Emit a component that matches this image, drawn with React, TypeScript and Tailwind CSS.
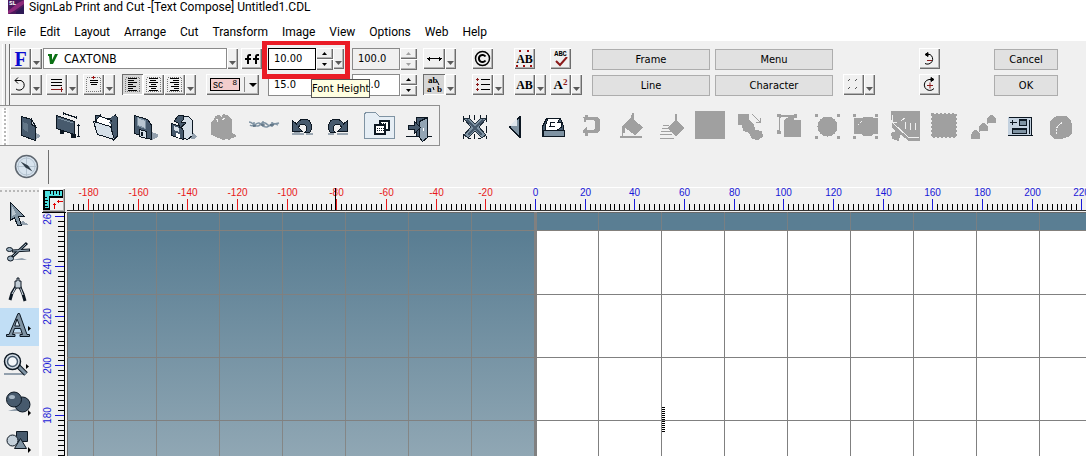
import { useEffect, useState } from "react";
import type { ReactNode } from "react";
import clsx from "clsx";

const RAISED =
  "bg-[#f0f0f0] shadow-[inset_1px_1px_0_#fff,inset_-1px_-1px_0_#6d6d6d,inset_-2px_-2px_0_#b4b4b4]";
const PRESSED = "bg-[#d6d6d6] shadow-[inset_1px_1px_0_#6d6d6d,inset_-1px_-1px_0_#fff]";

const MENUS = [
  "File",
  "Edit",
  "Layout",
  "Arrange",
  "Cut",
  "Transform",
  "Image",
  "View",
  "Options",
  "Web",
  "Help",
];

type ToolProps = {
  label: string;
  children: ReactNode;
  wide?: boolean;
  pressed?: boolean;
};

const Tool = ({ label, children, wide, pressed }: ToolProps) => (
  <button
    type="button"
    aria-label={label}
    className={clsx(
      "flex h-[21px] shrink-0 items-center justify-center",
      wide ? "w-[22px]" : "w-[21px]",
      pressed ? PRESSED : RAISED
    )}
  >
    {children}
  </button>
);

const DropButton = ({ label }: { label: string }) => (
  <button
    type="button"
    aria-label={label}
    className={clsx("flex h-[21px] w-[11px] shrink-0 items-end justify-center pb-[4px]", RAISED)}
  >
    <svg width="7" height="4" viewBox="0 0 7 4">
      <path d="M0 0h7L3.500 4z" fill="#5a5a5a" />
    </svg>
  </button>
);

const ToolIcon = ({ children }: { children: ReactNode }) => (
  <svg width="21" height="21" viewBox="0 0 21 21" fill="none" stroke="#000" shapeRendering="crispEdges">
    {children}
  </svg>
);

type SpinFieldProps = {
  label: string;
  initial: string;
  active?: boolean;
  disabled?: boolean;
};

const SpinField = ({ label, initial, active, disabled }: SpinFieldProps) => {
  const [value, setValue] = useState(initial);
  const digits = initial.split(".")[1].length;
  const step = (by: number) => setValue((Number(value) + by).toFixed(digits));

  return (
    <div className="flex h-[22px] shrink-0">
      <input
        aria-label={label}
        value={value}
        disabled={disabled}
        onChange={(e) => setValue(e.target.value)}
        className={clsx(
          "h-[22px] w-[48px] border pb-[2px] pl-[5px] outline-none",
          active ? "border-black" : "border-[#8a8a8a]",
          disabled ? "bg-[#f0f0f0]" : "bg-white"
        )}
      />
      <div className="flex flex-col">
        {[1, -1].map((by) => (
          <button
            key={by}
            type="button"
            aria-label={by > 0 ? `${label} up` : `${label} down`}
            disabled={disabled}
            onClick={() => step(by)}
            className={clsx("flex h-[11px] w-[17px] items-center justify-center", RAISED)}
          >
            <svg width="5" height="3" viewBox="0 0 5 3">
              <path d={by > 0 ? "M0 3h5L2.500 0z" : "M0 0h5L2.500 3z"} fill={disabled ? "#a0a0a0" : "#000"} />
            </svg>
          </button>
        ))}
      </div>
    </div>
  );
};

const PushButton = ({ children }: { children: string }) => (
  <button type="button" className="h-[21px] w-full border border-[#adadad] bg-[#e1e1e1] leading-[18px]">
    {children}
  </button>
);

const alignLines = (kind: "left" | "center" | "right") => {
  const widths = [9, 6, 9, 5, 8, 5, 9];
  return widths.map((w, i) => {
    const x = kind === "left" ? 6 : kind === "right" ? 15 - w : 10 - Math.floor(w / 2);
    return <path key={i} d={`M${x} ${4.5 + i * 2}h${w}`} />;
  });
};

const dottedFrame = <rect x="3.500" y="3.500" width="14" height="14" stroke="#777" strokeDasharray="1 1" />;

const TextToolbar = () => (
  <div className="flex h-[64px] gap-[3px] overflow-hidden pl-[2px] font-['DejaVu_Sans_Condensed','DejaVu_Sans',sans-serif] text-[11px]">
    <div className="mt-[3px] w-[4px] border-l border-r border-l-white border-r-[#8c8c8c]" />
    <div className="mt-[3px] flex items-start border-l border-[#6f6f6f] pt-[4px]">
      {/* font, rotation, alignment */}
      <div className="flex w-[252px] shrink-0 flex-col gap-[5px]">
        <div className="flex">
          <Tool label="Font style">
            <span className="font-['Liberation_Serif',serif] text-[20px] leading-none font-bold text-[#0a0ad0]">F</span>
          </Tool>
          <DropButton label="Font style options" />
          <label className="ml-px flex h-[21px] w-[186px] items-center border border-[#8a8a8a] bg-white pl-[4px]">
            <svg width="10" height="11" viewBox="0 0 10 11" className="mr-[6px]">
              <path d="M0 1h4v6l3-6h3L5 11H2L1 3H0z" fill="#0b7014" />
            </svg>
            <select aria-label="Font" className="flex-1 appearance-none bg-transparent text-[12px] outline-none">
              <option>CAXTONB</option>
            </select>
          </label>
          <DropButton label="Font list" />
          <span className="ml-[3px] flex">
            <Tool label="Ligatures">
              <svg width="14" height="12" viewBox="0 0 14 12" fill="none" stroke="#000" strokeWidth="2">
                <path d="M6 2H4.500Q3 2 3 4v7M0 6h6M14 2h-1.500Q11 2 11 4v7M8 6h6" />
              </svg>
            </Tool>
          </span>
        </div>
        <div className="flex">
          <Tool label="Rotate text">
            <ToolIcon>
              <path d="M5 6.500h6a5 5 0 1 1-5 8.500M8 3.500l-3 3 3 3" shapeRendering="auto" />
            </ToolIcon>
          </Tool>
          <DropButton label="Rotate options" />
          <span className="ml-[4px] flex">
            <Tool label="Text direction">
              <ToolIcon>
                <path d="M5 5.500h11M5 8.500h11M5 11.500h11" />
                <path d="M5 15.500h12M15.500 13v5" stroke="#8b1a1a" />
              </ToolIcon>
            </Tool>
            <DropButton label="Direction options" />
          </span>
          <span className="ml-[5px] flex">
            <Tool label="Vertical position">
              <ToolIcon>
                {dottedFrame}
                <path d="M7 6.500h8M7 8.500h8M8 10.500h6" />
                <path d="M10.500 2v3M9 3.500h3" stroke="#a01010" />
              </ToolIcon>
            </Tool>
            <DropButton label="Position options" />
          </span>
          <span className="ml-[7px] flex">
            <Tool label="Align left" pressed>
              <ToolIcon>{dottedFrame}{alignLines("left")}</ToolIcon>
            </Tool>
            <Tool label="Align centre">
              <ToolIcon>{dottedFrame}{alignLines("center")}</ToolIcon>
            </Tool>
            <Tool label="Align right">
              <ToolIcon>{dottedFrame}{alignLines("right")}</ToolIcon>
            </Tool>
            <DropButton label="Align options" />
          </span>
          <button
            type="button"
            className={clsx("ml-[10px] flex h-[21px] w-[53px] shrink-0 items-center gap-[4px] pl-[4px]", RAISED)}
          >
            <span className="flex h-[13px] w-[30px] justify-between border border-black bg-[#f3cdcd] px-[2px] font-['Liberation_Sans',sans-serif] text-[10px] leading-[12px]">
              sc<span className="text-[8px] leading-[8px]">8</span>
            </span>
            <svg width="13" height="15" viewBox="0 0 13 15">
              <path d="M.5 0v15" stroke="#8a8a8a" />
              <path d="M5 6h8l-4 4z" fill="#000" />
            </svg>
          </button>
        </div>
      </div>

      {/* font height with its highlight */}
      <div className="relative ml-[6px] flex shrink-0 flex-col gap-[4px]">
        <div className="flex">
          <SpinField label="Font Height" initial="10.00" active />
          <DropButton label="Font height units" />
        </div>
        <SpinField label="Line height" initial="15.0" />
        <div className="pointer-events-none absolute -top-[8px] -left-[6px] z-10 h-[39px] w-[88px] border-[5px] border-[#ea1c26]" />
        <div
          role="tooltip"
          className="absolute top-[31px] left-[43px] z-20 border border-[#555] bg-[#ffffe1] leading-[17px] whitespace-nowrap"
        >
          Font Height
        </div>
      </div>
      <div className="ml-[8px] flex shrink-0 flex-col gap-[4px]">
        <SpinField label="Font width" initial="100.0" disabled />
        <SpinField label="Slant" initial="10.0" />
      </div>

      <div className="ml-[6px] flex shrink-0 flex-col gap-[5px]">
        <div className="flex">
          <Tool label="Letter spacing" wide>
            <ToolIcon>
              <path d="M3 10.500h15M5.500 8.500v4M15.500 8.500v4M4.500 9.500v2M16.500 9.500v2" />
            </ToolIcon>
          </Tool>
          <DropButton label="Spacing options" />
        </div>
        <div className="flex">
          <Tool label="Kerning" wide pressed>
            <svg
              width="18"
              height="18"
              viewBox="0 0 18 18"
              className="font-['Liberation_Serif',serif] text-[9px] font-bold"
            >
              <text x="3" y="7">ab</text>
              <text x="2" y="16">a</text>
              <text x="12" y="16">b</text>
              <path d="M12 5l2 4M8 11l1 3" stroke="#000" />
            </svg>
          </Tool>
          <DropButton label="Kerning options" />
        </div>
      </div>
      <div className="ml-[16px] flex w-[32px] shrink-0 flex-col gap-[5px]">
        <Tool label="Copyright symbol">
          <svg width="17" height="17" viewBox="0 0 17 17" fill="none" stroke="#000">
            <circle cx="8.500" cy="8.500" r="7" strokeWidth="1.500" />
            <path d="M11.500 6.500a3.600 3.600 0 1 0 0 4" strokeWidth="2" />
          </svg>
        </Tool>
        <div className="flex">
          <Tool label="Bullets">
            <ToolIcon>
              <path d="M9 5.500h9M9 10.500h9M9 15.500h9" />
              <path d="M4 5.500h3M4 10.500h3M4 15.500h3M5.500 4v3M5.500 9v3M5.500 14v3" stroke="#8b1a1a" />
            </ToolIcon>
          </Tool>
          <DropButton label="Bullet options" />
        </div>
      </div>
      <div className="ml-[10px] flex w-[32px] shrink-0 flex-col gap-[5px]">
        <Tool label="Character marks">
          <span className="relative font-['Liberation_Serif',serif] text-[12px] leading-none font-bold">
            AB
            <svg className="absolute -top-[3px] left-0" width="17" height="18" viewBox="0 0 17 18" fill="#a01010">
              <path d="M3 0h2v2H3zM11 0h2v2h-2zM0 15h2v2H0zM7 15h2v2H7zM14 15h2v2h-2z" />
            </svg>
          </span>
        </Tool>
        <div className="flex">
          <Tool label="Case">
            <span className="font-['Liberation_Serif',serif] text-[12px] leading-none font-bold">AB</span>
          </Tool>
          <DropButton label="Case options" />
        </div>
      </div>
      <div className="ml-[4px] flex w-[32px] shrink-0 flex-col gap-[5px]">
        <Tool label="Spelling">
          <span className="flex flex-col items-center font-['Liberation_Mono',monospace] text-[7px] leading-[6px] font-bold">
            ABC
            <svg width="14" height="10" viewBox="0 0 14 10" fill="none" stroke="#8b1a1a" strokeWidth="2">
              <path d="M2 4l4 4 7-8" />
            </svg>
          </span>
        </Tool>
        <div className="flex">
          <Tool label="Superscript">
            <span className="flex font-['Liberation_Serif',serif] text-[13px] leading-none font-bold">
              A<sup className="top-0 text-[9px] leading-none text-[#8b1a1a]">2</sup>
            </span>
          </Tool>
          <DropButton label="Superscript options" />
        </div>
      </div>

      <div className="ml-[10px] grid w-[241px] shrink-0 grid-cols-2 gap-x-[5px] gap-y-[5px] pt-px">
        <PushButton>Frame</PushButton>
        <PushButton>Menu</PushButton>
        <PushButton>Line</PushButton>
        <PushButton>Character</PushButton>
      </div>
      <div className="mt-[26px] ml-[10px] flex shrink-0">
        <Tool label="Frame corners">
          <ToolIcon>
            <g stroke="#555" shapeRendering="auto">
              <path d="M5 7l2-2M12 7l2-2M5 15l2-2M12 15l2-2" />
            </g>
          </ToolIcon>
        </Tool>
        <DropButton label="Corner options" />
      </div>
      <div className="ml-[44px] flex shrink-0 flex-col gap-[5px]">
        <Tool label="Undo">
          <ToolIcon>
            <g shapeRendering="auto">
              <path d="M7 6.500h4a5 5 0 1 1-5 9" />
              <path d="M6 6.500l3-2v4z" fill="#000" />
              <path d="M8 12.500h5" stroke="#8b1a1a" />
            </g>
          </ToolIcon>
        </Tool>
        <Tool label="Redo">
          <ToolIcon>
            <g shapeRendering="auto">
              <path d="M13 5.500h-3a5.500 5.500 0 1 0 5 9" />
              <path d="M15 5.500l-3-2v4z" fill="#000" />
              <path d="M8 11.500h6M11 8.500v6" stroke="#8b1a1a" />
            </g>
          </ToolIcon>
        </Tool>
      </div>
      <div className="ml-[54px] flex w-[64px] shrink-0 flex-col gap-[5px] pt-px">
        <PushButton>Cancel</PushButton>
        <PushButton>OK</PushButton>
      </div>
    </div>
  </div>
);

const INK = "#0c1722";
const STEEL = "#475a6d";
const MID = "#7f93a3";
const PALE = "#d5dfe8";
const OFF = "#a0a0a0";

const FILE_ICONS: [string, ReactNode][] = [
  [
    "New",
    <>
      <path d="M27 25l4 2v2l-5 3-5-2z" fill="#93a0ad" />
      <path d="M12.500 8.500l10 3 4 6v15l-14-5z" fill={STEEL} stroke={INK} />
      <path d="M22.500 11.500v5l4 2z" fill={PALE} stroke={INK} />
      <path d="M14 14l5 2v8l-5-3z" fill={MID} opacity=".5" />
    </>,
  ],
  [
    "Page size",
    <>
      <path d="M12 21v4h3v-2M23 25v4h4v-3" fill={INK} stroke={INK} />
      <path d="M8.500 7.500l18 6v13l-18-6z" fill={STEEL} stroke={INK} />
      <path d="M10 10l15 5" stroke={MID} />
      <path d="M15 5.500h2v1h3v1h3v1h3v1h3M15 4v3M28 8v3M30.500 16v13M29 17h3M29 28h3" stroke={INK} />
    </>,
  ],
  [
    "Open",
    <>
      <path d="M8.500 15v-7l5-1 2 3 9 1 4-4 2 3v18l-4 4z" fill={STEEL} stroke={INK} />
      <path d="M9 12l4-4 12 5-1 10-15-8z" fill="#fff" stroke={INK} />
      <path d="M6.500 13.500l17 5 4 13-17-5z" fill={PALE} stroke={INK} />
      <path d="M23 14c2 2 4 0 4-5l-3 1" fill="none" stroke={STEEL} strokeWidth="2" />
    </>,
  ],
  [
    "Save",
    <>
      <path d="M25 24l7 2v3l-6 3z" fill="#93a0ad" />
      <path d="M8.500 7.500l13 4 3.500 5v15l-16.500-6z" fill={STEEL} stroke={INK} />
      <path d="M11.500 9.500l8 3v8l-8-3z" fill="#b9c6d1" stroke={MID} />
      <path d="M13.500 21.500l7 2v7l-7-2z" fill={PALE} stroke={INK} />
      <path d="M16 24v4" stroke={INK} strokeWidth="2" />
    </>,
  ],
  [
    "Save as",
    <>
      <path d="M14.500 8.500h9l4 4v15l-5 4-8-3z" fill={PALE} stroke={INK} />
      <path d="M6.500 15.500l9 3 3 4v9l-12-4z" fill={STEEL} stroke={INK} />
      <path d="M9 18l5 2v4l-5-2z" fill={PALE} />
      <path d="M11 25l4 1v4l-4-1z" fill="#fff" />
      <path d="M9 13l4-5 5-1 1 4-3 3 5 1-6 5-2-5z" fill={STEEL} stroke={INK} />
      <path d="M28 25l4 3-3 3h-3z" fill="#93a0ad" />
    </>,
  ],
  [
    "Revert",
    <>
      <path
        d="M7 14l3-2 1-4 4-1 3 2 1-3 4 1 5 4v14l4 2v2l-4 1-3 2-3-1-3 1-9-4-3-1z"
        fill={OFF}
      />
      <path d="M12 11h2l-1 3M18 12l3-2" stroke="#f0f0f0" />
    </>,
  ],
  [
    "Barbed line",
    <g stroke={MID} fill="none" shapeRendering="auto">
      <path
        d="M6 14c4 0 5 5 9 4s3-5 7-3 3 4 7 2 4-1 7-2M7 17c4 3 6-3 9-2s4 5 8 4 4-6 11-2M11 14v5M20 13v6M29 14v5"
        strokeWidth="1.500"
      />
      <path d="M10 18h3M18 17h4M27 17h4" stroke={STEEL} />
    </g>,
  ],
  [
    "Undo",
    <>
      <path d="M10 26h12M24 26h7M12 24h6" stroke="#9aa6b1" strokeWidth="2" />
      <path d="M10.500 12.500v11h10l-3.500-3.500c-1-4 6-6 8 0 0 2-1 3-2 4h5c3-4 2-12-5-13-4 0-7 2-8.500 5z" fill={STEEL} stroke={INK} />
    </>,
  ],
  [
    "Redo",
    <>
      <path d="M7 26h6M16 26h11" stroke="#9aa6b1" strokeWidth="2" />
      <path d="M26.500 12.500v11h-10l3.500-3.500c1-4-6-6-8 0 0 2 1 3 2 4H9c-3-4-2-12 5-13 4 0 7 2 8.500 5z" fill={STEEL} stroke={INK} />
    </>,
  ],
  [
    "Job folder",
    <>
      <path d="M4.500 30.500v-25l2-1h9l4 4h15v22z" fill="#e6eef5" stroke={MID} />
      <path d="M19.500 12.500h9v9h-9z" fill="#fff" stroke={INK} strokeWidth="2" />
      <path d="M14.500 16.500h10v9h-10z" fill="#fff" stroke={INK} strokeWidth="2" />
      <path d="M17 20.500h7M17 22.500h7M21 15.500h6" stroke={INK} strokeDasharray="1 1" />
    </>,
  ],
  [
    "Exit",
    <>
      <path d="M7 28.500h12M27 28.500h6" stroke={INK} />
      <path d="M17.500 9.500h11v19h-11z" fill={STEEL} stroke={INK} />
      <path d="M20.500 29.500v-16l8-4v20l-5 4z" fill="#93a5b4" stroke={INK} />
      <path d="M9.500 17.500h6v-4l6 6-6 6v-4h-6z" fill={STEEL} stroke={INK} />
      <path d="M24 20v3" stroke="#fff" />
    </>,
  ],
];

const EDIT_ICONS: [string, ReactNode][] = [
  [
    "Delete",
    <>
      <path d="M7.500 8v6M7.500 26v5M18.500 7v5M18.500 26v5M30.500 7v7M30.500 18v7M30.500 28v3M12 30.500h3M22 30.500h3M13.500 7v3M24.500 7v3" stroke={INK} />
      <path d="M8 11l5-1 6 6 6-6 5 1-7 8 7 8-4 3-7-7-7 7-4-3 7-8z" fill={MID} stroke="#22303d" />
      <path d="M11 12l15 15M27 12L12 27" stroke={STEEL} strokeWidth="2" />
    </>,
  ],
  [
    "Mirror",
    <>
      <path d="M26 8v22h-2L13 19 24 8z" fill={INK} />
      <path d="M23.500 11v16l-8-8z" fill={MID} />
      <path d="M14 18l8-8v8z" fill="#dfe7ee" />
    </>,
  ],
  [
    "Output tray",
    <>
      <path d="M8.500 18.500l4-8h14l3 8v10h-21z" fill={STEEL} stroke={INK} />
      <path d="M11 19l3-9h12l-2 4h3l1 5-5 3h-12z" fill="#fff" stroke={INK} />
      <path d="M21 14h-4l-1 4h5" stroke={INK} fill="none" />
      <path d="M9 22h21v6H9z" fill={MID} stroke={INK} />
    </>,
  ],
  [
    "Return",
    <path d="M10 9h2V7h3v2h9l3 3v10l-3 3h-9v3h-3v-3h-2v-3l4-3v3h7l1-2v-6l-1-2h-8v2h-2v-3z" fill={OFF} />,
  ],
  ["Fill", <path d="M20 5h2v7l9 7-8 8-10-7v5h-2v3h19v2H8v-2h2V18l9-8z" fill={OFF} />],
  [
    "Gradient fill",
    <>
      <path d="M24 6h2v7l8 7-9 8-9-8 8-8z" fill={OFF} />
      <path d="M12 17h6M11 20.500h8M10 23.500h10M9 26.500h12M9 30h14" stroke={OFF} />
    </>,
  ],
  ["Solid", <path d="M5 3h30v28H5z" fill={OFF} />],
  [
    "Blend",
    <>
      <path d="M9 6h11v6l5 4 1 6 7 1 1 6-5 3-6-1-3-6-6-2-1-6H9z" fill={OFF} />
      <path d="M23 6l8 8M31 10v4h-4" stroke={OFF} fill="none" />
    </>,
  ],
  ["Align", <path d="M9 6h4v1h13V6h3v4h-3v2h7v17H16V12l5-3h-8v1h-1v13h1v3H9v-4h2V9H9z" fill={OFF} />],
  [
    "Circle nodes",
    <>
      <circle cx="20.500" cy="18.500" r="10" fill={OFF} />
      <path d="M8 6h3v3H8zM30 6h3v3h-3zM8 28h3v3H8zM30 28h3v3h-3z" fill={OFF} />
    </>,
  ],
  [
    "Box nodes",
    <>
      <path d="M7 6h3v3H7zM29 6h3v3h-3zM7 28h3v3H7zM29 28h3v3h-3zM8 10h7l3-1h7l3 1h4v16h-4l-3 2h-7l-3-2H8z" fill={OFF} />
      <path d="M12 17l4-4" stroke="#f0f0f0" strokeDasharray="2 1" />
    </>,
  ],
  [
    "Trace",
    <>
      <path d="M6 3h29v30H24L7 20z" fill={OFF} />
      <path d="M8 15l15 14h11M21 14l-1 7M25 15v7M30 15v7" stroke="#f0f0f0" fill="none" />
      <path d="M7 7v7h5M16 13l4-3" stroke="#f0f0f0" />
      <path d="M6 25l5-2 4 4-1 6-7-2z" fill={OFF} />
    </>,
  ],
  [
    "Stamp",
    <>
      <path d="M8 6h24v23H8z" fill={OFF} />
      <path d="M8 6h24v23H8z" fill="none" stroke={OFF} strokeWidth="2" strokeDasharray="2 2" />
    </>,
  ],
  [
    "Along path",
    <>
      <path d="M8 31v-4l3-5h3l3 4v5zM16 23v-4l3-4h3l3 4v4zM24 15v-4l3-4h3l3 4v4z" fill={OFF} />
      <path d="M15 25l2-2M24 16l2-2" stroke={OFF} />
    </>,
  ],
  [
    "Object panel",
    <>
      <path d="M6 9h24v19H6z" fill="#c3d1df" />
      <path d="M7 9.500h23M6 27.500h25M29.500 9v19" stroke={INK} />
      <path d="M17.500 12.500h7v5h-7zM10.500 21.500h14v4h-14z" fill={MID} stroke={INK} />
      <path d="M17 12h8M10 21h15" stroke={INK} strokeWidth="2" />
      <path d="M8 14.500h7M10.500 12v5M27.500 12v14" stroke={INK} />
    </>,
  ],
  [
    "Weld",
    <>
      <path d="M12 10l4-2h9l5 4 1 5v8l-4 4-7 2h-7l-4-5V13z" fill={OFF} />
      <path d="M15 26v-5l3-4 4-3" stroke="#f0f0f0" strokeDasharray="2 1" fill="none" />
    </>,
  ],
];

const IconButton = ({ label, children, selected }: { label: string; children: ReactNode; selected?: boolean }) => (
  <button type="button" aria-label={label} className={clsx("h-[38px] w-[39px] shrink-0", selected && "bg-[#c1def5]")}>
    <svg width="39" height="38" viewBox="0 0 39 38" fill="none" shapeRendering="crispEdges">
      {children}
    </svg>
  </button>
);

const IconToolbar = () => (
  <div className="flex overflow-hidden">
    <div className="flex h-[41px] w-[440px] shrink-0 border-t border-r border-b border-[#8f8f8f] pt-[2px]">
      <div className="w-[9px] border-x-2 border-[#f8f8f8] bg-white pl-[2px]">
        <div className="h-full border-l-2 border-dotted border-[#b8b8b8]" />
      </div>
      {FILE_ICONS.map(([label, art]) => (
        <IconButton key={label} label={label}>
          {art}
        </IconButton>
      ))}
    </div>
    <div className="flex pt-[3px] pl-[16px]">
      {EDIT_ICONS.map(([label, art]) => (
        <IconButton key={label} label={label}>
          {art}
        </IconButton>
      ))}
    </div>
  </div>
);

const CompassBar = () => (
  <div className="flex h-[41px] items-center">
    <button type="button" aria-label="Navigator" className="flex h-[34px] w-[49px] items-center border-r border-[#6f6f6f] pl-[14px]">
      <svg width="25" height="25" viewBox="0 0 25 25">
        <circle cx="12.500" cy="12.500" r="11" fill="#d7e3ee" stroke="#5f6770" strokeWidth="1.500" />
        <circle cx="12.500" cy="12.500" r="8.500" fill="none" stroke="#b4c3d0" />
        <path d="M12.500 3v19M3 12.500h19" stroke="#b4c3d0" />
        <path d="M6.500 7.500l7.500 4 4.500 6-7-4z" fill="#2f3c48" />
      </svg>
    </button>
  </div>
);

const DRAW_TOOLS: [string, ReactNode][] = [
  [
    "Select",
    <>
      <path d="M16 31h13l-6-4z" fill="#93a0ad" />
      <path d="M10.500 8.500v18l4-3 3 8h4l-3-9h6z" fill={MID} stroke={INK} />
      <path d="M12 12v10l4-2" fill="#b9c6d1" />
    </>,
  ],
  [
    "Cut",
    <g shapeRendering="auto">
      <path d="M12 28h15l-5-2z" fill="#93a0ad" />
      <path d="M30 18l-18 1M27 11L12 25" stroke={INK} strokeWidth="3" />
      <path d="M29 18l-16 1M26 12L13 24" stroke="#9db0bf" />
      <ellipse cx="9.500" cy="17.500" rx="3" ry="2" stroke={INK} fill="#9db0bf" />
      <ellipse cx="10.500" cy="26.500" rx="3" ry="2.500" stroke={INK} fill="#9db0bf" />
    </g>,
  ],
  [
    "Node edit",
    <g shapeRendering="auto">
      <path d="M17 15l-5 8-2 7M19 15l4 9 2 7" stroke={INK} strokeWidth="3" />
      <path d="M16 17l-4 7M20 17l3 8" stroke="#d5dfe8" />
      <path d="M17 8h2v3h2v7h-6v-7h2z" fill="#c2cdd6" stroke={INK} />
    </g>,
  ],
  [
    "Text",
    <g shapeRendering="auto">
      <path d="M12 25h10" stroke="#93a0ad" strokeWidth="2" />
      <path
        d="M18 5.500h1.500l7.500 21h2.500v2H20v-2h2.500l-2-6h-6l-2 6H15v2H6.500v-2H9z"
        fill={MID}
        stroke={INK}
      />
      <path d="M17 11l-2.200 7h5z" fill="#d8e9f7" stroke={INK} />
      <path d="M28 18v5l3-2.500z" fill="#000" />
    </g>,
  ],
  [
    "Zoom",
    <g shapeRendering="auto">
      <path d="M4 28h20" stroke="#93a0ad" strokeWidth="2" />
      <path d="M18 20l8 8" stroke={INK} strokeWidth="5" />
      <path d="M18 20l8 8" stroke={MID} strokeWidth="3" />
      <circle cx="12.500" cy="15.500" r="8" fill={PALE} stroke={INK} strokeWidth="1.500" />
      <circle cx="12.500" cy="15.500" r="5" fill="#f3f7fa" stroke={STEEL} strokeWidth="1.500" />
      <path d="M26 18v5l3-2.500z" fill="#000" />
    </g>,
  ],
  [
    "Shapes",
    <g shapeRendering="auto">
      <path d="M8 27h13l-3-3z" fill="#93a0ad" />
      <circle cx="22.500" cy="20.500" r="7.500" fill={STEEL} stroke={INK} />
      <circle cx="14" cy="15.500" r="7.500" fill={STEEL} stroke={INK} />
      <ellipse cx="12" cy="13" rx="3" ry="2" fill="#a6b6c4" />
      <path d="M28 26v6l3-3z" fill="#000" />
    </g>,
  ],
  [
    "Objects",
    <g shapeRendering="auto">
      <path d="M16.500 9.500h11v10h-11z" fill={STEEL} stroke={INK} />
      <circle cx="12.500" cy="18.500" r="5.500" fill="#c4d0da" stroke={INK} />
      <path d="M20.500 16.500l6 10h-12z" fill={MID} stroke={INK} />
      <path d="M28 25v6l3-3z" fill="#000" />
    </g>,
  ],
];

const DrawTools = () => (
  <div className="flex w-[39px] shrink-0 flex-col pt-[2px]">
    <div className="mb-[2px] h-[2px] border-b-2 border-dotted border-[#b8b8b8]" />
    {DRAW_TOOLS.map(([label, art]) => (
      <IconButton key={label} label={label} selected={label === "Text"}>
        {art}
      </IconButton>
    ))}
  </div>
);

// ruler scale: 20 units are 149/3 px, ticks every 2 units
const UNIT = 149 / 60;
const ORIGIN_X = 468;
const range = (from: number, to: number, step: number) => {
  const out: number[] = [];
  for (let v = from; v <= to; v += step) out.push(v);
  return out;
};

const HorizontalRuler = ({ length }: { length: number }) => {
  const last = Math.floor((length - ORIGIN_X) / UNIT);
  return (
    <svg className="h-[24px] w-full shrink-0 font-['Liberation_Sans',sans-serif]" shapeRendering="crispEdges">
      {range(-186, last, 2).map((v) => {
        const x = Math.round(ORIGIN_X + v * UNIT) + 0.5;
        const major = v % 20 === 0;
        const color = v < 0 ? "#e81818" : "#1818d8";
        return (
          <g key={v}>
            <path d={`M${x} ${major ? 11 : 16}V22`} stroke={major ? color : "#000"} />
            {major && (
              <text x={x} y="8" fontSize="10" textAnchor="middle" fill={color}>
                {v}
              </text>
            )}
          </g>
        );
      })}
      <path d="M0 22.500h4000" stroke="#333" />
      <path d="M268.500 0v22" stroke="#000" />
    </svg>
  );
};

const VerticalRuler = ({ length }: { length: number }) => {
  const first = Math.ceil((240 - (length - 54) / UNIT) / 2) * 2;
  return (
    <svg className="min-h-0 w-[24px] flex-1 font-['Liberation_Sans',sans-serif]" shapeRendering="crispEdges">
      {range(first, 260, 2).map((v) => {
        const y = Math.round(54 + (240 - v) * UNIT) + 0.5;
        const major = v % 20 === 0;
        return (
          <g key={v}>
            <path d={`M${major ? 13 : 16} ${y}H22`} stroke={major ? "#1818d8" : "#000"} />
            {major && (
              <text transform={`translate(9 ${y}) rotate(-90)`} fontSize="10" textAnchor="middle" fill="#1818d8">
                {v}
              </text>
            )}
          </g>
        );
      })}
      <path d="M22.500 0v4000" stroke="#000" />
      <path d="M0 .5h24" stroke="#000" />
    </svg>
  );
};

const Workspace = () => (
  <svg className="min-h-0 w-full flex-1 bg-linear-to-b from-[#5a7e93] from-10% to-[#90a7b4]" shapeRendering="crispEdges">
    <path d="M0 .5h4000M.5 0v4000" stroke="#6a6a6a" />
    <rect x="470" y="19" width="4000" height="4000" fill="#fff" />
    {range(-7, -1, 1).map((i) => (
      <path key={i} d={`M${467.5 + i * 63} 0V4000`} stroke="#83807c" opacity=".8" />
    ))}
    {range(1, 60, 1).map((i) => (
      <g key={i} stroke="#808080">
        <path d={`M${468.5 + i * 63} 0V18`} opacity=".8" />
        <path d={`M${468.5 + i * 63} 18V4000`} />
      </g>
    ))}
    <path d="M0 18.500h4000" stroke="#83807c" />
    {range(1, 30, 1).map((i) => (
      <path key={i} d={`M0 ${19.5 + i * 63}H4000`} stroke="#808080" />
    ))}
    <path d="M468.500 0v4000" stroke="#808080" strokeWidth="3" />
    <path d="M596.500 195v25" stroke="#000" strokeWidth="3" strokeDasharray="1 1" />
  </svg>
);

const App = () => {
  const [size, setSize] = useState({ width: window.innerWidth, height: window.innerHeight });

  useEffect(() => {
    const onResize = () => setSize({ width: window.innerWidth, height: window.innerHeight });
    window.addEventListener("resize", onResize);
    return () => window.removeEventListener("resize", onResize);
  }, []);

  return (
    <div className="flex h-screen flex-col overflow-hidden bg-[#f0f0f0] text-black">
      <header className="bg-white font-['Roboto',sans-serif] text-[12px]">
        <div className="flex h-[22px] items-start gap-[5px] pl-[8px]">
          <svg width="16" height="14" viewBox="0 0 16 14">
            <path d="M0 0h16v14H0z" fill="#4b1a5c" />
            <path d="M0 11L10 3l6-3v4L6 11l-6 3z" fill="#8e2b7c" />
            <path d="M8 12l8-6v8H8z" fill="#2d1a55" />
            <text x="1" y="5" fontSize="6" fontWeight="bold" fill="#fff">
              SL
            </text>
          </svg>
          <h1 className="leading-[14px] whitespace-nowrap">SignLab Print and Cut -[Text Compose] Untitled1.CDL</h1>
        </div>
        <nav className="flex h-[19px] gap-[14px] pl-[7px] leading-[20px]">
          {MENUS.map((menu) => (
            <button key={menu} type="button">
              {menu}
            </button>
          ))}
        </nav>
      </header>
      <TextToolbar />
      <IconToolbar />
      <CompassBar />
      <main className="flex min-h-0 flex-1 border-t border-white">
        <DrawTools />
        <div className="flex w-[28px] shrink-0 flex-col border-l-3 border-white">
          <button type="button" aria-label="Ruler origin" className={clsx("h-[24px] w-[23px] shrink-0", RAISED)}>
            <svg width="23" height="23" viewBox="0 0 23 23" shapeRendering="crispEdges">
              <path d="M1 1h20v8H8v12H1z" fill="#000" />
              <path d="M3 2h17v5H7v12H3z" fill="#4fe0e0" />
              <path d="M8.500 2v3M11.500 2v4M14.500 2v3M17.500 2v4M3 8.500h2M3 11.500h3M3 14.500h2M3 17.500h3" stroke="#000" />
              <path d="M21 12.500h-6M16.500 11v3M12.500 20v-6M11 15.500h3" stroke="#e00000" />
            </svg>
          </button>
          <VerticalRuler length={size.height - 212} />
        </div>
        <div className="flex min-w-0 flex-1 flex-col">
          <HorizontalRuler length={size.width - 67} />
          <Workspace />
        </div>
      </main>
    </div>
  );
};

export default App;
